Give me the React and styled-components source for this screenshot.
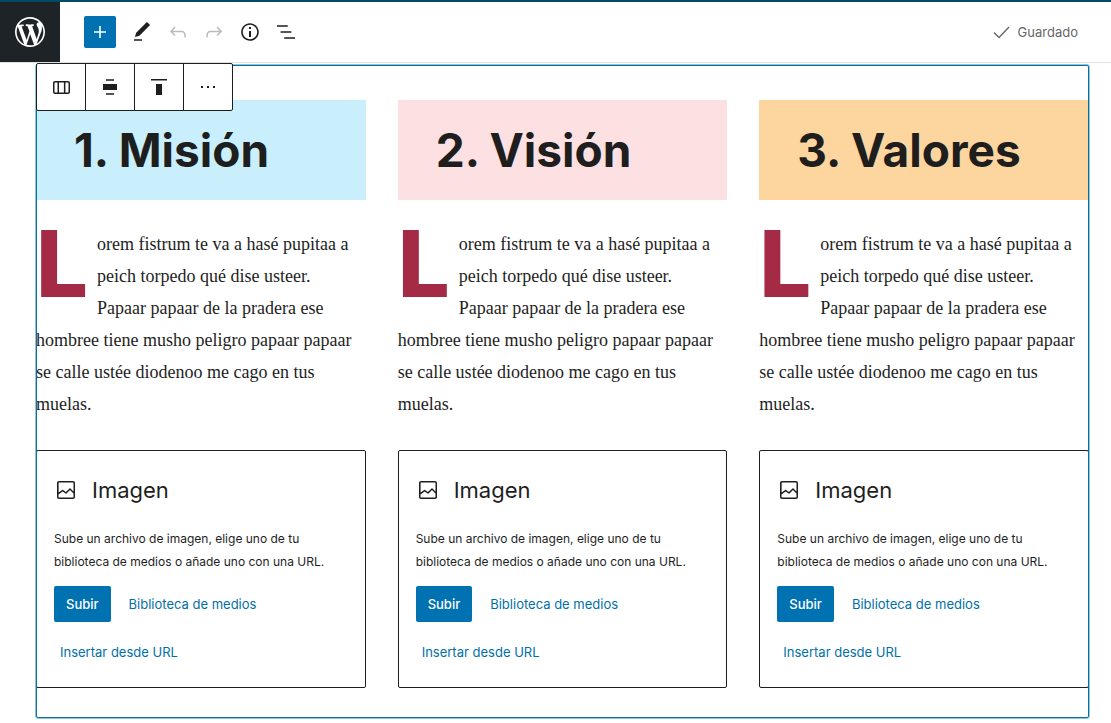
import React from "react";
import styled, { createGlobalStyle } from "styled-components";

const GlobalStyle = createGlobalStyle`
  *, *::before, *::after { box-sizing: border-box; }
  body {
    margin: 0;
    background: #fff;
    color: #1e1e1e;
    font: 13px/20px Inter, "Liberation Sans", sans-serif;
  }
  button { font: inherit; color: inherit; cursor: pointer; }
`;

const icons = {
  plus: "M18 11.2h-5.2V6h-1.6v5.2H6v1.6h5.2V18h1.6v-5.2H18z",
  edit: "M20.1 5.1L16.9 2 6.2 12.7l-1.3 4.4 4.5-1.3L20.1 5.1zM4 20.8h8v-1.5H4v1.5z",
  undo: "M18.3 11.7c-.6-.6-1.4-.9-2.3-.9H6.7l2.9-3.3-1.1-1-4.5 5L8.5 16l1-1-2.7-2.7H16c.5 0 .9.2 1.3.5 1 1 1 3.4 1 4.5v.3h1.5v-.2c0-1.5 0-4.3-1.5-5.7z",
  redo: "M15.6 6.5l-1.1 1 2.9 3.3H8c-.9 0-1.7.3-2.3.9-1.4 1.5-1.4 4.2-1.4 5.6v.2h1.5v-.3c0-1.1 0-3.5 1-4.5.3-.3.7-.5 1.3-.5h9.2L14.5 15l1.1 1.1 4.6-4.6-4.6-5z",
  info: "M12 3.2c-4.8 0-8.8 3.9-8.8 8.8 0 4.8 3.9 8.8 8.8 8.8 4.8 0 8.8-3.9 8.8-8.8 0-4.8-4-8.8-8.8-8.8zm0 16c-4 0-7.2-3.3-7.2-7.2C4.8 8 8 4.8 12 4.8s7.2 3.3 7.2 7.2c0 4-3.2 7.2-7.2 7.2zM11 17h2v-6h-2v6zm0-8h2V7h-2v2z",
  list: "M13.8 5.2H3v1.5h10.8V5.2zm-3.6 12v1.5H21v-1.5H10.2zm7.2-6H6.6v1.5h10.8v-1.5z",
  check: "M9 18.6L3.5 13l1-1L9 16.4l9.5-9.9 1 1z",
  columns: "M19 6H6c-1.1 0-2 .9-2 2v9c0 1.1.9 2 2 2h13c1.1 0 2-.9 2-2V8c0-1.1-.9-2-2-2zm-4.1 1.5v10H10v-10h4.9zM5.5 17V8c0-.3.2-.5.5-.5h2.5v10H6c-.3 0-.5-.2-.5-.5zm14 0c0 .3-.2.5-.5.5h-2.6v-10H19c.3 0 .5.2.5.5v9z",
  alignWide: "M5 9v6h14V9H5zm11-4.8H8v1.5h8V4.2zM8 19.8h8v-1.5H8v1.5z",
  alignTop: "M9 20h6V9H9v11zM4 4v1.5h16V4H4z",
  more: "M11 13h2v-2h-2v2zm-6 0h2v-2H5v2zm12-2v2h2v-2h-2z",
  image: "M19 3H5c-1.1 0-2 .9-2 2v14c0 1.1.9 2 2 2h14c1.1 0 2-.9 2-2V5c0-1.1-.9-2-2-2zM5 4.5h14c.3 0 .5.2.5.5v8.4l-3-2.9c-.3-.3-.8-.3-1 0L11.9 14 9 12c-.3-.2-.6-.2-.8 0l-3.6 2.6V5c-.1-.3.1-.5.4-.5zm14 15H5c-.3 0-.5-.2-.5-.5v-2.4l4.1-3 3 1.9c.3.2.7.2.9-.1L16 12l3.5 3.4V19c0 .3-.2.5-.5.5z",
};

const Svg = styled.svg`
  display: block;
  flex: none;
  fill: currentColor;
`;

const Icon = ({ name, size = 24 }) => (
  <Svg width={size} height={size} viewBox="0 0 24 24" aria-hidden="true">
    <path d={icons[name]} />
  </Svg>
);

const Header = styled.header`
  display: flex;
  align-items: center;
  height: 63px;
  border-top: 2px solid #004b63;
  border-bottom: 1px solid #e0e0e0;
`;

const HomeLink = styled.a`
  display: flex;
  align-items: center;
  justify-content: center;
  width: 60px;
  height: 60px;
  background: #1e2327;
  color: #fff;
`;

const Tools = styled.div`
  display: flex;
  align-items: center;
  padding-left: 24px;
`;

const Inserter = styled.button`
  display: flex;
  align-items: center;
  justify-content: center;
  width: 32px;
  height: 32px;
  margin-right: 8px;
  padding: 0;
  border: 0;
  border-radius: 2px;
  background: #0071b1;
  color: #fff;
`;

const ToolButton = styled.button`
  display: flex;
  align-items: center;
  justify-content: center;
  width: 36px;
  height: 36px;
  padding: 0;
  border: 0;
  background: none;
  color: #1e1e1e;
  &:disabled { color: #bbb; }
`;

const Saved = styled.div`
  display: flex;
  align-items: center;
  gap: 4px;
  margin-left: auto;
  padding-right: 33px;
  color: #666;
`;

const Canvas = styled.main`
  padding: 2px 22px 5px 36px;
`;

const ColumnsBlock = styled.section`
  position: relative;
  padding: 35px 0 30px;
  &::after {
    content: "";
    position: absolute;
    inset: 0;
    border: 1px solid #0f6f9f;
    border-radius: 2px;
    box-shadow: 0 0 0 1px #8fc6de;
    pointer-events: none;
  }
`;

const BlockToolbar = styled.div`
  position: absolute;
  z-index: 1;
  top: -2px;
  left: 0;
  display: flex;
  border: 1px solid #1e1e1e;
  border-radius: 2px;
  background: #fff;
`;

const BlockButton = styled.button`
  display: flex;
  align-items: center;
  justify-content: center;
  width: 49px;
  height: 46px;
  padding: 0;
  border: 0;
  border-right: 1px solid #1e1e1e;
  background: none;
  &:last-child { width: 48px; border-right: 0; }
`;

const ColumnGrid = styled.div`
  display: grid;
  grid-template-columns: repeat(3, minmax(0, 1fr));
  gap: 32px;
`;

const Title = styled.h2`
  margin: 0 0 28px;
  padding: 20px 38px;
  background: ${(p) => p.$tint};
  font-size: 46px;
  line-height: 60px;
  font-weight: 700;
  white-space: nowrap;
`;

const Paragraph = styled.p`
  margin: 0 0 30px;
  font: 18px/32px "Liberation Serif", serif;
`;

const DropCap = styled.span`
  float: left;
  padding: 2px 9px 0 0;
  color: #a52a45;
  font: 800 92px/68px Inter, "Liberation Sans", sans-serif;
`;

const Placeholder = styled.div`
  padding: 17px;
  border: 1px solid #1e1e1e;
  border-radius: 2px;
`;

const PlaceholderLabel = styled.div`
  display: flex;
  align-items: center;
  gap: 14px;
  height: 44px;
  font-size: 22px;
  line-height: 28px;
`;

const Instructions = styled.p`
  margin: 15px 0 13px;
  font-size: 12px;
  line-height: 23px;
`;

const Actions = styled.div`
  display: flex;
  flex-wrap: wrap;
  align-items: center;
  gap: 12px;
  margin-bottom: 12px;
  &:last-child { margin-bottom: 0; }
`;

const PrimaryButton = styled.button`
  height: 36px;
  padding: 0 12px;
  border: 0;
  border-radius: 2px;
  background: #0071b1;
  color: #fff;
  font-weight: 500;
`;

const LinkButton = styled.button`
  height: 36px;
  padding: 0 6px;
  border: 0;
  background: none;
  color: #0071a8;
`;

const columns = [
  { title: "1. Misión", tint: "#c9effd" },
  { title: "2. Visión", tint: "#fde0e1" },
  { title: "3. Valores", tint: "#fdd59e" },
];

const ImagePlaceholder = () => (
  <Placeholder>
    <PlaceholderLabel>
      <Icon name="image" />
      Imagen
    </PlaceholderLabel>
    <Instructions>
      Sube un archivo de imagen, elige uno de tu
      <br />
      biblioteca de medios o añade uno con una URL.
    </Instructions>
    <Actions>
      <PrimaryButton type="button">Subir</PrimaryButton>
      <LinkButton type="button">Biblioteca de medios</LinkButton>
    </Actions>
    <Actions>
      <LinkButton type="button">Insertar desde URL</LinkButton>
    </Actions>
  </Placeholder>
);

export default function App() {
  return (
    <>
      <GlobalStyle />
      <Header>
        <HomeLink href="#" aria-label="WordPress">
          <Svg width="36" height="36" viewBox="-2 -2 24 24" aria-hidden="true">
            <path d="M20 10c0-5.51-4.49-10-10-10C4.48 0 0 4.49 0 10c0 5.52 4.48 10 10 10 5.51 0 10-4.48 10-10zM7.78 15.37L4.37 6.22c.55-.02 1.17-.08 1.17-.08.5-.06.44-1.13-.06-1.11 0 0-1.45.11-2.37.11-.18 0-.37 0-.58-.01C4.12 2.69 6.87 1.11 10 1.11c2.33 0 4.45.87 6.05 2.34-.68-.11-1.65.39-1.65 1.58 0 .74.45 1.36.9 2.1.35.61.55 1.36.55 2.46 0 1.49-1.4 5-1.4 5l-3.03-8.37c.54-.02.82-.17.82-.17.5-.05.44-1.25-.06-1.22 0 0-1.44.12-2.38.12-.87 0-2.33-.12-2.33-.12-.5-.03-.56 1.2-.06 1.22l.92.08 1.26 3.41zM17.41 10c.24-.64.74-1.87.43-4.25.7 1.29 1.05 2.71 1.05 4.25 0 3.29-1.73 6.24-4.4 7.78.97-2.59 1.94-5.2 2.92-7.78zM6.1 18.09C3.12 16.65 1.11 13.53 1.11 10c0-1.3.23-2.48.72-3.59C3.25 10.3 4.67 14.2 6.1 18.09zm4.03-6.63l2.58 6.98c-.86.29-1.76.45-2.71.45-.79 0-1.57-.11-2.29-.33.81-2.38 1.62-4.74 2.42-7.1z" />
          </Svg>
        </HomeLink>
        <Tools role="toolbar" aria-label="Herramientas del documento">
          <Inserter type="button" aria-label="Añadir bloque"><Icon name="plus" /></Inserter>
          <ToolButton type="button" aria-label="Modos"><Icon name="edit" /></ToolButton>
          <ToolButton type="button" aria-label="Deshacer" disabled><Icon name="undo" /></ToolButton>
          <ToolButton type="button" aria-label="Rehacer" disabled><Icon name="redo" /></ToolButton>
          <ToolButton type="button" aria-label="Detalles"><Icon name="info" /></ToolButton>
          <ToolButton type="button" aria-label="Vista de lista"><Icon name="list" /></ToolButton>
        </Tools>
        <Saved><Icon name="check" />Guardado</Saved>
      </Header>
      <Canvas>
        <ColumnsBlock>
          <BlockToolbar role="toolbar" aria-label="Herramientas del bloque">
            <BlockButton type="button" aria-label="Columnas"><Icon name="columns" /></BlockButton>
            <BlockButton type="button" aria-label="Alineación"><Icon name="alignWide" /></BlockButton>
            <BlockButton type="button" aria-label="Alineación vertical"><Icon name="alignTop" /></BlockButton>
            <BlockButton type="button" aria-label="Opciones"><Icon name="more" /></BlockButton>
          </BlockToolbar>
          <ColumnGrid>
            {columns.map((c) => (
              <article key={c.title}>
                <Title $tint={c.tint}>{c.title}</Title>
                <Paragraph>
                  <DropCap>L</DropCap>
                  orem fistrum te va a hasé pupitaa a
                  <br />
                  peich torpedo qué dise usteer.
                  <br />
                  Papaar papaar de la pradera ese
                  <br />
                  hombree tiene musho peligro papaar papaar
                  <br />
                  se calle ustée diodenoo me cago en tus
                  <br />
                  muelas.
                </Paragraph>
                <ImagePlaceholder />
              </article>
            ))}
          </ColumnGrid>
        </ColumnsBlock>
      </Canvas>
    </>
  );
}
